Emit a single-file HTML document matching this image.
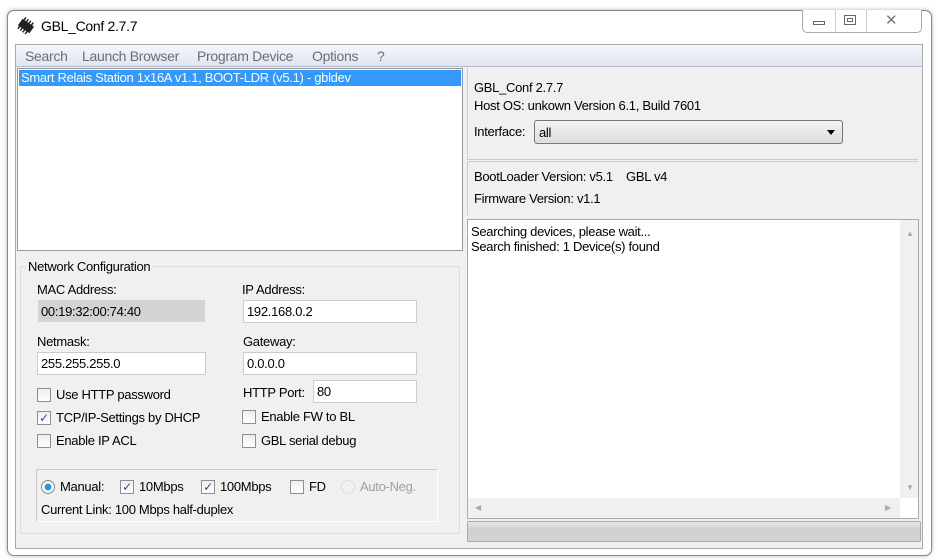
<!DOCTYPE html>
<html><head><style>
*{box-sizing:border-box;margin:0;padding:0}
body{width:938px;height:560px;background:#fff;font-family:"Liberation Sans",sans-serif;font-size:13px;color:#000;position:relative;overflow:hidden;letter-spacing:-0.3px}
.a{position:absolute}
.win{left:7px;top:10px;width:925px;height:546px;border:1px solid #888;border-radius:7px;background:#fff;box-shadow:0 0 4px rgba(0,0,0,.3)}
.client{left:15px;top:44px;width:908px;height:505px;background:#f0f0f0;border:1px solid #aaa}
.tb{background:#fff;border:1px solid #ccc}
.cb{width:14px;height:14px;border:1px solid #8f8f8f;background:linear-gradient(#eee,#fff)}
.lbl{white-space:nowrap}
.m{position:absolute;top:48px;color:#6d6d6d;font-size:14px;white-space:nowrap}
</style></head><body>
<div class="a win"></div>
<svg class="a" style="left:16px;top:17px" width="20" height="18" viewBox="0 0 20 18"><g transform="rotate(35 10 9)"><rect x="3" y="5" width="14" height="8" fill="#222"/><g stroke="#222" stroke-width="1.5"><line x1="5" y1="2" x2="5" y2="16"/><line x1="8" y1="2" x2="8" y2="16"/><line x1="11" y1="2" x2="11" y2="16"/><line x1="14" y1="2" x2="14" y2="16"/></g></g></svg>
<div class="a lbl" style="left:41px;top:18px;font-size:14px">GBL_Conf 2.7.7</div>
<div class="a" style="left:802px;top:10px;width:120px;height:23px;border:1px solid #aaa;border-top:none;border-radius:0 0 5px 5px;background:#fff"></div>
<div class="a" style="left:835px;top:10px;width:1px;height:23px;background:#ccc"></div>
<div class="a" style="left:866px;top:10px;width:1px;height:23px;background:#ccc"></div>
<div class="a" style="left:813px;top:21px;width:12px;height:4px;border:1px solid #666"></div>
<div class="a" style="left:844px;top:15px;width:12px;height:10px;border:1px solid #666"><div style="margin:2px;height:4px;border:1px solid #666"></div></div>
<div class="a" style="left:885px;top:11px;font-size:15px;color:#777">✕</div>
<div class="a client"></div>
<div class="a" style="left:16px;top:45px;width:906px;height:22px;background:linear-gradient(#f4f6fb,#dfe6f2);border-bottom:1px solid #b6bccc"></div>
<div class="m" style="left:25px">Search</div>
<div class="m" style="left:82px">Launch Browser</div>
<div class="m" style="left:197px">Program Device</div>
<div class="m" style="left:312px">Options</div>
<div class="m" style="left:377px">?</div>
<div class="a" style="left:17px;top:68px;width:446px;height:183px;background:#fff;border:1px solid #999"></div>
<div class="a lbl" style="left:19px;top:70px;width:442px;height:16px;background:#3399ff;color:#fff;padding-left:2px;font-size:13px;line-height:16px">Smart Relais Station 1x16A v1.1, BOOT-LDR (v5.1) - gbldev</div>
<div class="a" style="left:20px;top:266px;width:440px;height:268px;border:1px solid #dcdcdc"></div>
<div class="a lbl" style="left:26px;top:259px;background:#f0f0f0;padding:0 2px">Network Configuration</div>
<div class="a lbl" style="left:37px;top:282px">MAC Address:</div>
<div class="a" style="left:38px;top:300px;width:167px;height:22px;background:#d3d3d3"></div>
<div class="a lbl" style="left:41px;top:304px">00:19:32:00:74:40</div>
<div class="a lbl" style="left:242px;top:282px">IP Address:</div>
<div class="a tb" style="left:243px;top:300px;width:174px;height:23px"></div>
<div class="a lbl" style="left:247px;top:304px">192.168.0.2</div>
<div class="a lbl" style="left:37px;top:334px">Netmask:</div>
<div class="a tb" style="left:37px;top:352px;width:169px;height:23px"></div>
<div class="a lbl" style="left:41px;top:356px">255.255.255.0</div>
<div class="a lbl" style="left:243px;top:334px">Gateway:</div>
<div class="a tb" style="left:243px;top:352px;width:174px;height:23px"></div>
<div class="a lbl" style="left:247px;top:356px">0.0.0.0</div>
<div class="a lbl" style="left:243px;top:385px">HTTP Port:</div>
<div class="a tb" style="left:313px;top:380px;width:104px;height:23px"></div>
<div class="a lbl" style="left:317px;top:384px">80</div>
<div class="a cb" style="left:37px;top:388px"></div><div class="a lbl" style="left:56px;top:387px">Use HTTP password</div>
<div class="a cb" style="left:37px;top:411px;color:#2a4ea0;font-size:12px;line-height:12px;text-align:center">✓</div><div class="a lbl" style="left:56px;top:410px">TCP/IP-Settings by DHCP</div>
<div class="a cb" style="left:37px;top:434px"></div><div class="a lbl" style="left:56px;top:433px">Enable IP ACL</div>
<div class="a cb" style="left:242px;top:410px"></div><div class="a lbl" style="left:261px;top:409px">Enable FW to BL</div>
<div class="a cb" style="left:242px;top:434px"></div><div class="a lbl" style="left:261px;top:433px">GBL serial debug</div>
<div class="a" style="left:36px;top:469px;width:402px;height:53px;border:1px solid #c8c8c8;border-right-color:#fff;border-bottom-color:#fff"></div>
<div class="a" style="left:41px;top:480px;width:14px;height:14px;border-radius:50%;border:1px solid #888;background:radial-gradient(#1e9be0 35%,#fff 45%)"></div>
<div class="a lbl" style="left:60px;top:479px">Manual:</div>
<div class="a cb" style="left:120px;top:480px;color:#2a4ea0;font-size:12px;line-height:12px;text-align:center">✓</div><div class="a lbl" style="left:139px;top:479px">10Mbps</div>
<div class="a cb" style="left:201px;top:480px;color:#2a4ea0;font-size:12px;line-height:12px;text-align:center">✓</div><div class="a lbl" style="left:220px;top:479px">100Mbps</div>
<div class="a cb" style="left:290px;top:480px"></div><div class="a lbl" style="left:309px;top:479px">FD</div>
<div class="a" style="left:341px;top:480px;width:14px;height:14px;border-radius:50%;border:1px solid #ddd"></div>
<div class="a lbl" style="left:360px;top:479px;color:#a0a0a0">Auto-Neg.</div>
<div class="a lbl" style="left:41px;top:502px">Current Link: 100 Mbps half-duplex</div>
<div class="a" style="left:467px;top:68px;width:451px;height:92px;border-left:1px solid #ccc;border-bottom:1px solid #ccc"></div>
<div class="a lbl" style="left:474px;top:80px">GBL_Conf 2.7.7</div>
<div class="a lbl" style="left:474px;top:98px">Host OS: unkown Version 6.1, Build 7601</div>
<div class="a lbl" style="left:474px;top:124px">Interface:</div>
<div class="a" style="left:534px;top:120px;width:309px;height:24px;border:1px solid #777;border-radius:3px;background:linear-gradient(#f3f3f3,#dcdcdc)"></div>
<div class="a lbl" style="left:539px;top:125px">all</div>
<div class="a" style="left:827px;top:130px;width:0;height:0;border:4px solid transparent;border-top:5px solid #000"></div>
<div class="a" style="left:467px;top:161px;width:451px;height:54px;border-left:1px solid #ccc;border-top:1px solid #ccc"></div>
<div class="a lbl" style="left:474px;top:169px">BootLoader Version: v5.1 &nbsp;&nbsp;&nbsp;GBL v4</div>
<div class="a lbl" style="left:474px;top:191px">Firmware Version: v1.1</div>
<div class="a" style="left:467px;top:219px;width:452px;height:300px;background:#fff;border:1px solid #aaa"></div>
<div class="a" style="left:900px;top:220px;width:18px;height:278px;background:#f0f0f0"></div>
<div class="a" style="left:468px;top:498px;width:432px;height:20px;background:#f0f0f0"></div>
<div class="a" style="left:906px;top:229px;font-size:8px;color:#aaa">▲</div>
<div class="a" style="left:906px;top:483px;font-size:8px;color:#aaa">▼</div>
<div class="a" style="left:475px;top:503px;font-size:8px;color:#aaa">◀</div>
<div class="a" style="left:885px;top:503px;font-size:8px;color:#aaa">▶</div>
<div class="a lbl" style="left:471px;top:224px;line-height:15px">Searching devices, please wait...<br>Search finished: 1 Device(s) found</div>
<div class="a" style="left:467px;top:521px;width:454px;height:21px;border:1px solid #aaa;border-radius:2px;background:linear-gradient(#e6e6e6,#d0d0d0 40%,#d4d4d4)"></div>
</body></html>
